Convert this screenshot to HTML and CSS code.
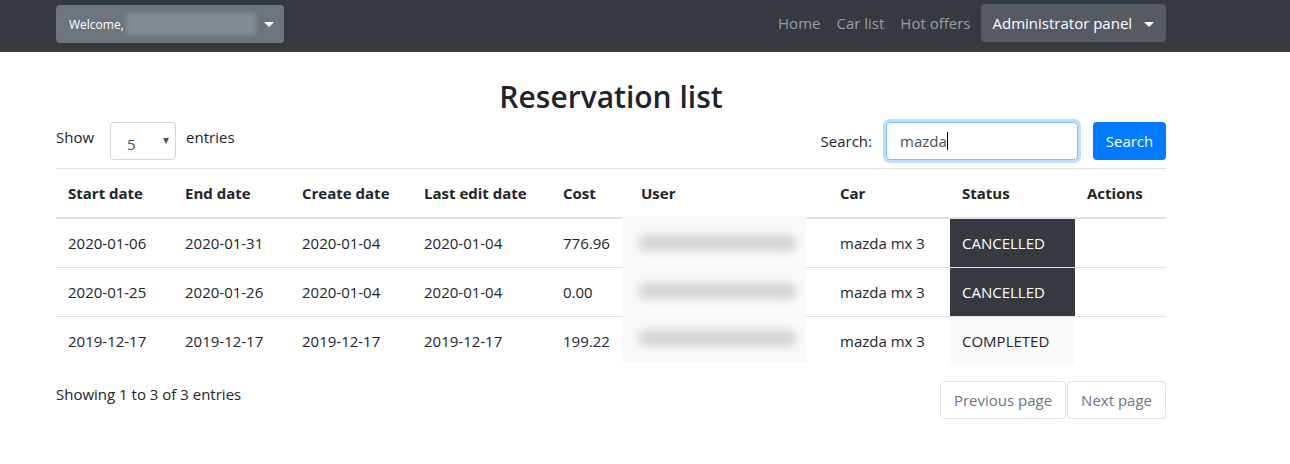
FILE: index.html
```html
<!DOCTYPE html>
<html lang="en">
<head>
<meta charset="utf-8">
<title>Reservation list</title>
<link rel="stylesheet" href="styles.css">
</head>
<body>
<nav class="navbar">
  <div class="nav-inner">
    <button class="btn-welcome">
      <span class="welcome-text">Welcome,</span>
      <span class="blur-name"></span>
      <span class="caret"></span>
    </button>
    <div class="nav-right">
      <a class="nav-link" href="#">Home</a>
      <a class="nav-link" href="#">Car list</a>
      <a class="nav-link" href="#">Hot offers</a>
      <button class="btn-admin">Administrator panel <span class="caret"></span></button>
    </div>
  </div>
</nav>
<main class="container">
  <h2 class="title">Reservation list</h2>
  <div class="controls">
    <div class="show">
      <span>Show</span>
      <div class="select"><span>5</span><span class="sel-arrow"></span></div>
      <span>entries</span>
    </div>
    <div class="search">
      <span>Search:</span>
      <div class="input">mazda<span class="cursor"></span></div>
      <button class="btn-search">Search</button>
    </div>
  </div>
  <div class="table-wrap">
    <table class="table">
      <colgroup>
        <col style="width:117px"><col style="width:117px"><col style="width:122px"><col style="width:139px"><col style="width:78px"><col style="width:199px"><col style="width:122px"><col style="width:125px"><col style="width:91px">
      </colgroup>
      <thead>
        <tr><th>Start date</th><th>End date</th><th>Create date</th><th>Last edit date</th><th>Cost</th><th>User</th><th>Car</th><th>Status</th><th>Actions</th></tr>
      </thead>
      <tbody>
        <tr><td>2020-01-06</td><td>2020-01-31</td><td>2020-01-04</td><td>2020-01-04</td><td>776.96</td><td></td><td>mazda mx 3</td><td class="st-dark">CANCELLED</td><td></td></tr>
        <tr><td>2020-01-25</td><td>2020-01-26</td><td>2020-01-04</td><td>2020-01-04</td><td>0.00</td><td></td><td>mazda mx 3</td><td class="st-dark">CANCELLED</td><td></td></tr>
        <tr><td>2019-12-17</td><td>2019-12-17</td><td>2019-12-17</td><td>2019-12-17</td><td>199.22</td><td></td><td>mazda mx 3</td><td class="st-light">COMPLETED</td><td></td></tr>
      </tbody>
    </table>
    <div class="user-blur">
      <div class="blur-row"><span class="blur-bar"></span></div>
      <div class="blur-row"><span class="blur-bar"></span></div>
      <div class="blur-row"><span class="blur-bar"></span></div>
    </div>
  </div>
  <div class="footer">
    <div class="info">Showing 1 to 3 of 3 entries</div>
    <div class="pager">
      <button class="page-btn">Previous page</button>
      <button class="page-btn">Next page</button>
    </div>
  </div>
</main>
</body>
</html>
```
FILE: styles.css
```css
* { box-sizing: border-box; }
body {
  margin: 0;
  font-family: "Open Sans", "Noto Sans", sans-serif;
  font-size: 15px;
  color: #212529;
  background: #fff;
}
.navbar {
  background: #343a40;
  height: 52px;
}
.nav-inner {
  margin-left: 56px;
  width: 1110px;
  height: 52px;
  display: flex;
  align-items: center;
  justify-content: space-between;
}
.btn-welcome {
  margin-top: -4px;
  width: 228px;
  height: 38px;
  background: #6c757d;
  border: none;
  border-radius: 4px;
  display: flex;
  align-items: center;
  padding: 0 0 0 13px;
  font-family: inherit;
  color: #fff;
}
.welcome-text { font-size: 12px; }
.blur-name {
  width: 130px;
  height: 22px;
  margin-left: 2px;
  background: #848b92;
  filter: blur(2px);
}
.caret {
  display: inline-block;
  width: 0; height: 0;
  border-left: 5px solid transparent;
  border-right: 5px solid transparent;
  border-top: 5px solid #fff;
  margin-left: 8px;
  vertical-align: middle;
}
.nav-right {
  display: flex;
  align-items: center;
  margin-top: -6px;
}
.nav-link {
  color: rgba(255,255,255,0.5);
  text-decoration: none;
  padding: 0 8px;
  font-size: 15px;
}
.btn-admin {
  height: 38px;
  margin-left: 2px;
  background: #545b62;
  color: #fff;
  border: none;
  border-radius: 4px;
  padding: 0 12px 0 12px;
  font-family: inherit;
  font-size: 15px;
}
.container {
  margin-left: 56px;
  width: 1110px;
}
.title {
  text-align: center;
  font-size: 30px;
  font-weight: 600;
  margin: 24px 0 0;
  line-height: 42px;
  height: 46px;
}
.controls {
  display: flex;
  justify-content: space-between;
  align-items: flex-start;
  height: 47px;
  border-bottom: 1px solid #dee2e6;
}
.show {
  display: flex;
  align-items: center;
  gap: 10px;
  height: 30px;
}
.show > span:first-child { margin-right: 6px; }
.select {
  width: 66px;
  height: 38px;
  margin-top: 8px;
  border: 1px solid #ced4da;
  border-radius: 4px;
  display: flex;
  align-items: center;
  justify-content: space-between;
  padding: 6px 6px 0 16px;
  font-size: 15px;
  color: #495057;
}
.sel-arrow {
  width: 0; height: 0;
  border-left: 3.5px solid transparent;
  border-right: 3.5px solid transparent;
  border-top: 6px solid #495057;
  margin-top: -6px;
}
.search {
  display: flex;
  align-items: center;
  height: 38px;
}
.input {
  width: 192px;
  height: 38px;
  margin-left: 14px;
  border: 1px solid #80bdff;
  border-radius: 4px;
  box-shadow: 0 0 0 3px rgba(0,123,255,0.25);
  padding: 0 13px;
  display: flex;
  align-items: center;
  color: #495057;
}
.cursor {
  display: inline-block;
  width: 1px;
  height: 18px;
  background: #000;
}
.btn-search {
  margin-left: 15px;
  width: 73px;
  height: 38px;
  background: #007bff;
  border: none;
  border-radius: 4px;
  color: #fff;
  font-family: inherit;
  font-size: 15px;
}
.table-wrap { position: relative; }
.table {
  width: 1110px;
  table-layout: fixed;
  border-collapse: collapse;
}
.table th, .table td {
  padding: 12px;
  text-align: left;
  vertical-align: top;
  white-space: nowrap;
  line-height: 24px;
}
.table th {
  font-weight: 700;
  border-bottom: 2px solid #dee2e6;
}
.table td { border-top: 1px solid #dee2e6; }
.st-dark { background: #343a40; color: #fff; }
.st-light { background: #fafafa; }
.user-blur {
  position: absolute;
  left: 566px;
  top: 47px;
  width: 184px;
  height: 146px;
  background: #f8f9fa;
  display: flex;
  flex-direction: column;
  padding-top: 3px;
}
.blur-row {
  height: 49px;
  display: flex;
  align-items: center;
  padding-left: 16px;
}
.blur-bar {
  width: 158px;
  height: 16px;
  background: #d3d4d5;
  border-radius: 8px;
  filter: blur(4px);
}
.footer {
  display: flex;
  justify-content: space-between;
  margin-top: 16px;
}
.info { padding-top: 3px; }
.pager { display: flex; }
.page-btn {
  height: 38px;
  background: #fff;
  border: 1px solid #dee2e6;
  border-radius: 4px;
  color: #6c757d;
  font-family: inherit;
  font-size: 15px;
  padding: 0 13px;
}
.page-btn + .page-btn { margin-left: 1px; }
```
